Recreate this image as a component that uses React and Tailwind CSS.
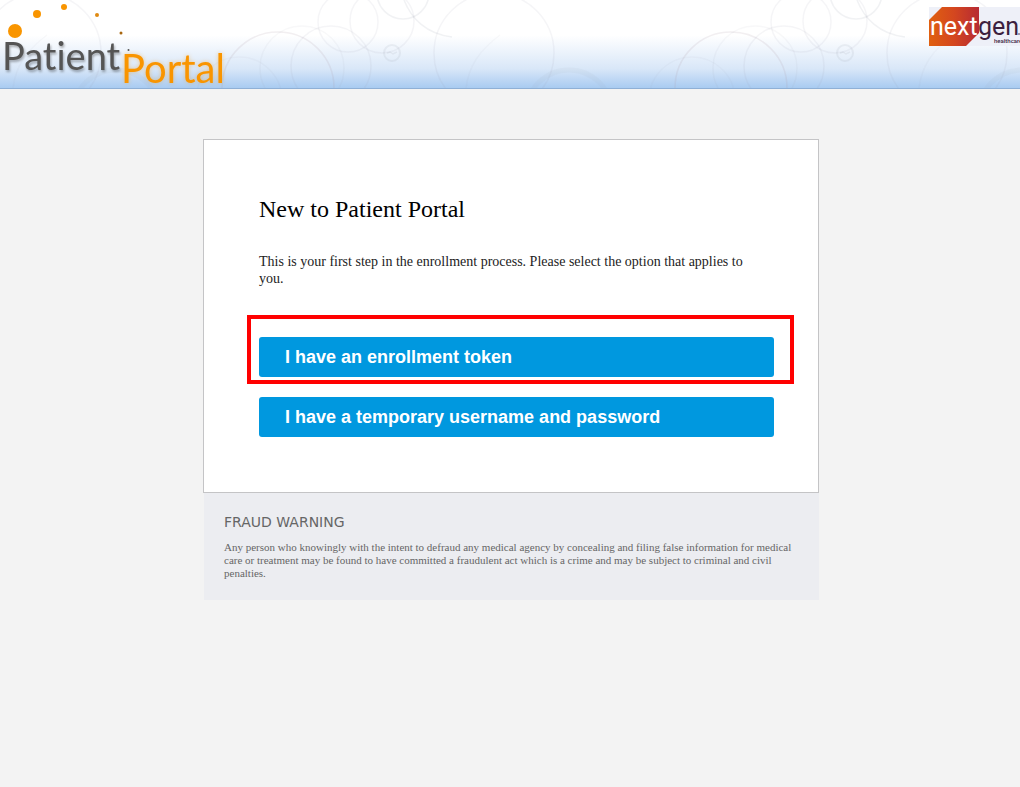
import React from 'react';

const TILE_OFFSETS = [-453, 0, 453];

const options = [
  { id: 'token', label: 'I have an enrollment token', highlighted: true },
  { id: 'credentials', label: 'I have a temporary username and password', highlighted: false },
];

const BubbleTile = () => (
  <g fill="none" stroke="#9aa0b0" strokeOpacity="0.1" strokeWidth="1.5">
    <circle cx="278" cy="88" r="56" stroke="#b09aa8" strokeOpacity="0.16" />
    <circle cx="302" cy="68" r="42" strokeOpacity="0.07" />
    <circle cx="331" cy="66" r="40" />
    <circle cx="348" cy="22" r="30" />
    <circle cx="382" cy="21" r="32" />
    <circle cx="403" cy="-7" r="26" strokeOpacity="0.14" />
    <circle cx="392" cy="53" r="8" strokeWidth="2" strokeOpacity="0.14" />
    <path d="M404 0 C411 18 426 34 452 37" strokeOpacity="0.14" />
    <path d="M387 53 l3 -1 l3 2 l4 -2" strokeOpacity="0.14" />
    <circle cx="494" cy="53" r="60" />
    <path d="M466 88 C469 65 480 50 500 35" strokeOpacity="0.06" />
    <circle cx="569" cy="113" r="43" strokeWidth="5" strokeOpacity="0.08" />
    <circle cx="239" cy="100" r="43" strokeOpacity="0.06" />
  </g>
);

const HeaderBubbles = () => (
  <svg className="absolute inset-0 h-full w-full" aria-hidden="true">
    {TILE_OFFSETS.map((x) => (
      <g key={x} transform={`translate(${x} 0)`}>
        <BubbleTile />
      </g>
    ))}
  </svg>
);

const PortalLogo = () => (
  <svg className="relative shrink-0 overflow-visible" width="230" height="88" viewBox="0 0 230 88" role="img" aria-label="Patient Portal">
    <g fill="#f99500">
      <circle cx="15" cy="31" r="7" />
      <circle cx="37" cy="14" r="4" />
      <circle cx="64" cy="7" r="3" />
      <circle cx="97" cy="15" r="2" fill="#df8a12" />
      <circle cx="121" cy="33" r="1.5" fill="#a8660f" />
      <circle cx="128.5" cy="50" r="1" fill="#555" />
    </g>
    <g fontFamily="Lato, sans-serif" className="[font-variant-ligatures:none]">
      <text x="2" y="70" fontSize="38" fill="#555" className="drop-shadow-[1px_2px_1px_rgba(0,0,0,0.3)]">Patient</text>
      <text x="121" y="83" fontSize="40" fill="#f99500" className="drop-shadow-[0_0_2px_rgba(249,149,0,0.4)]">Portal</text>
    </g>
  </svg>
);

const NextGenLogo = () => (
  <svg className="relative mt-[7px] shrink-0" width="91" height="39" viewBox="0 0 91 39" role="img" aria-label="nextgen healthcare">
    <defs>
      <linearGradient id="ngFill" x1="0" y1="0" x2="1" y2="0">
        <stop offset="0" stopColor="#e06010" />
        <stop offset="0.5" stopColor="#d4471f" />
        <stop offset="1" stopColor="#b62a34" />
      </linearGradient>
    </defs>
    <rect width="91" height="39" fill="#eef0f8" />
    <path d="M13 0 H50 V26 L37 39 H0 V13 Z" fill="url(#ngFill)" />
    <g fontFamily="Roboto, sans-serif" fontSize="25">
      <text x="1" y="28" fill="#fff">next</text>
      <text x="49" y="28" fill="#3c1f3e">gen</text>
    </g>
    <circle cx="90" cy="27" r="1" fill="#8a7890" />
    <text x="65" y="36" fontFamily="Roboto, sans-serif" fontSize="6" fontWeight="500" fill="#3c1f3e">healthcare</text>
  </svg>
);

const OptionButton = ({ label, highlighted }) => (
  <div className="relative">
    <button
      type="button"
      className="block h-10 w-full rounded-[3px] bg-[#0098df] pl-[26px] text-left font-['Helvetica','Liberation_Sans',sans-serif] text-lg font-bold text-white"
    >
      {label}
    </button>
    {highlighted && (
      <div className="pointer-events-none absolute -top-[22px] -right-5 -bottom-[7px] -left-3 border-4 border-[#ff0000]" />
    )}
  </div>
);

const App = () => {
  return (
    <div className="min-h-screen overflow-x-hidden bg-[#f3f3f3] font-['Liberation_Serif',serif]">
      {/* Header */}
      <header className="relative flex items-start justify-between border-b border-[#8fb0d6] bg-linear-to-b from-white from-40% via-[#d9e7f8] via-78% to-[#a9cbf1]">
        <HeaderBubbles />
        <PortalLogo />
        <NextGenLogo />
      </header>

      <main className="mx-auto w-full max-w-[618px] pt-[50px] pl-0.5">
        {/* Enrollment options */}
        <section className="border border-[#c4c4c6] bg-white pt-[55px] pr-11 pb-[55px] pl-[55px]">
          <h1 className="text-2xl leading-7 text-black">New to Patient Portal</h1>
          <p className="mt-[30px] pr-4 text-sm leading-[17px] text-[#222]">
            This is your first step in the enrollment process. Please select the option that applies to you.
          </p>
          <div className="mt-[50px] flex flex-col gap-5">
            {options.map((option) => (
              <OptionButton key={option.id} label={option.label} highlighted={option.highlighted} />
            ))}
          </div>
        </section>

        {/* Fraud warning */}
        <section className="ml-px bg-[#ecedf1] px-5 pt-5 pb-5 text-[#666]">
          <h2 className="font-['Verdana','DejaVu_Sans',sans-serif] text-sm leading-[18px]">FRAUD WARNING</h2>
          <p className="mt-[10px] text-[11px] leading-[13px]">
            Any person who knowingly with the intent to defraud any medical agency by concealing and filing false
            information for medical care or treatment may be found to have committed a fraudulent act which is a crime
            and may be subject to criminal and civil penalties.
          </p>
        </section>
      </main>
    </div>
  );
};

export default App;
